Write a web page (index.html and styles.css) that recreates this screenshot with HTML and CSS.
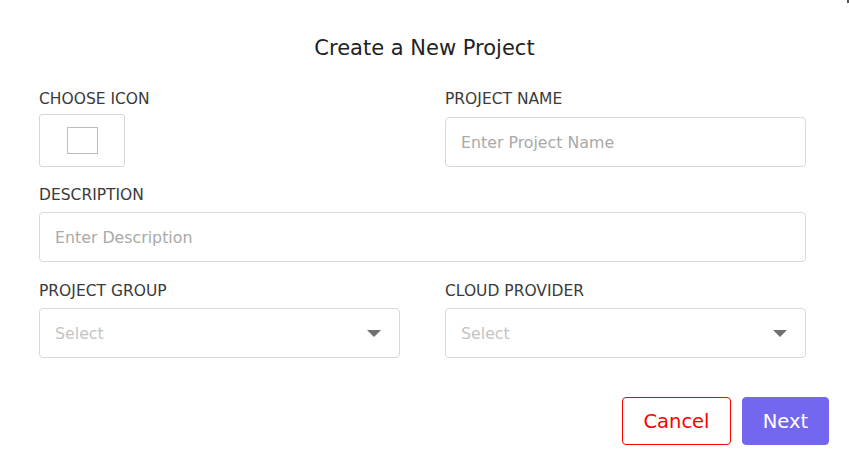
FILE: index.html
```html
<!DOCTYPE html>
<html>
<head>
<meta charset="utf-8">
<link rel="stylesheet" href="styles.css">
</head>
<body>
<div class="modal">
  <span class="corner"></span>
  <h1 class="title">Create a New Project</h1>
  <form class="form">
    <div class="field">
      <label class="label">CHOOSE ICON</label>
      <div class="icon-box"><span class="icon-square"></span></div>
    </div>
    <div class="field">
      <label class="label">PROJECT NAME</label>
      <div class="input input-top">Enter Project Name</div>
    </div>
    <div class="field span2">
      <label class="label">DESCRIPTION</label>
      <div class="input">Enter Description</div>
    </div>
    <div class="field row3">
      <label class="label">PROJECT GROUP</label>
      <div class="input select"><span class="select-text">Select</span><span class="caret"></span></div>
    </div>
    <div class="field row3">
      <label class="label">CLOUD PROVIDER</label>
      <div class="input select"><span class="select-text">Select</span><span class="caret"></span></div>
    </div>
  </form>
  <div class="actions">
    <button class="btn btn-cancel" type="button">Cancel</button>
    <button class="btn btn-next" type="button">Next</button>
  </div>
</div>
</body>
</html>
```
FILE: styles.css
```css
html, body {
  margin: 0;
  padding: 0;
  background: #ffffff;
}
body {
  font-family: "DejaVu Sans", "Open Sans", sans-serif;
  color: #333;
  width: 849px;
  height: 462px;
  overflow: hidden;
}
.modal {
  position: relative;
  padding: 33px 20px 0 39px;
}
.corner {
  position: absolute;
  top: 0;
  right: 0;
  width: 2px;
  height: 3px;
  background: #555;
}
.title {
  margin: 0 0 0 -39px;
  width: 849px;
  text-align: center;
  font-size: 21px;
  line-height: 30px;
  font-weight: 400;
  color: #222;
}
.form {
  margin-top: 26px;
  width: 767px;
  display: grid;
  grid-template-columns: 361px 361px;
  column-gap: 45px;
  row-gap: 18px;
}
.span2 {
  grid-column: 1 / 3;
}
.row3 {
  margin-top: 1px;
}
.field {
  display: flex;
  flex-direction: column;
}
.label {
  font-size: 15.5px;
  line-height: 20px;
  color: #3a3a3a;
  margin-bottom: 7px;
}
.icon-box {
  margin-top: -2px;
  width: 84px;
  height: 51px;
  border: 1px solid #d6d6d6;
  border-radius: 3px;
  display: flex;
  align-items: center;
  justify-content: center;
}
.icon-square {
  width: 29px;
  height: 25px;
  border: 1px solid #bdbdbd;
}
.input {
  box-sizing: border-box;
  height: 50px;
  border: 1px solid #d9d9d9;
  border-radius: 4px;
  padding: 0 15px;
  display: flex;
  align-items: center;
  font-size: 15.8px;
  color: #a9a9a9;
}
.input-top {
  margin-top: 1px;
}
.select {
  justify-content: space-between;
  padding-right: 18px;
}
.select-text {
  color: #c4c4c4;
}
.caret {
  width: 0;
  height: 0;
  border-left: 7px solid transparent;
  border-right: 7px solid transparent;
  border-top: 7px solid #707070;
}
.actions {
  margin-top: 39px;
  display: flex;
  justify-content: flex-end;
  gap: 11px;
}
.btn {
  font-family: inherit;
  height: 48px;
  border-radius: 4px;
  font-size: 19.5px;
  cursor: pointer;
  padding: 0;
}
.btn-cancel {
  width: 109px;
  background: #fff;
  border: 1px solid #ff0000;
  color: #ff0000;
}
.btn-next {
  width: 87px;
  background: #7367f0;
  border: 1px solid #7367f0;
  color: #fff;
}
```
